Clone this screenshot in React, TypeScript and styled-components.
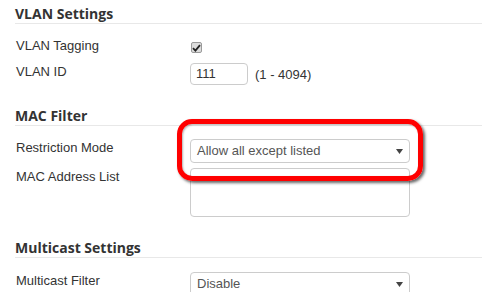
import React from 'react';
import styled, { createGlobalStyle } from 'styled-components';

const GlobalStyle = createGlobalStyle`
	html, body {
		margin: 0;
		padding: 0;
		background: #ffffff;
	}
	body {
		font-family: "Liberation Sans", Arial, sans-serif;
		font-size: 13px;
		color: #333333;
	}
`

type FieldsProps = {
	$top?: number
	$gap?: number
}

const Page = styled.div`
	position: relative;
	width: 482px;
	height: 292px;
	overflow: hidden;
	padding-left: 15px;
	box-sizing: border-box;
`

const Section = styled.section`
	margin-bottom: 17px;
`

const Heading = styled.h3`
	margin: 0 -15px 0 0;
	padding-top: 4px;
	font-family: "Open Sans", sans-serif;
	font-weight: 700;
	font-size: 14px;
	line-height: 19px;
	color: #333333;
	border-bottom: 1px solid #e8e8e8;
`

const Fields = styled.div<FieldsProps>`
	display: flex;
	flex-direction: column;
	gap: ${p => p.$gap ?? 5}px;
	padding-top: ${p => p.$top ?? 13}px;
`

const Row = styled.div<{ $height?: number }>`
	display: grid;
	grid-template-columns: 175px 1fr;
	align-items: start;
	min-height: ${p => p.$height ?? 0}px;
`

const Label = styled.label`
	padding-left: 1px;
	line-height: 17px;
	color: #333333;
`

const Control = styled.div`
	display: flex;
	align-items: center;
	gap: 7px;
`

const Check = styled.span`
	display: flex;
	align-items: center;
	justify-content: center;
	width: 11px;
	height: 11px;
	margin: 5px 0 0 1px;
	box-sizing: border-box;
	border: 1px solid #9a9a9a;
	border-radius: 2px;
	background: #dcdcdc;
`

const TextInput = styled.div`
	width: 58px;
	height: 22px;
	box-sizing: border-box;
	border: 1px solid #cccccc;
	border-radius: 4px;
	padding: 0 5px;
	line-height: 20px;
	color: #333333;
`

const Hint = styled.span`
	color: #333333;
`

const SelectBox = styled.div`
	display: flex;
	align-items: center;
	justify-content: space-between;
	width: 220px;
	height: 24px;
	box-sizing: border-box;
	border: 1px solid #cccccc;
	border-radius: 4px;
	padding: 0 6px;
	background: #ffffff;
	color: #555555;
	line-height: 22px;
`

const TextArea = styled.div`
	width: 220px;
	height: 49px;
	box-sizing: border-box;
	border: 1px solid #cccccc;
	border-radius: 4px;
	background: #ffffff;
`

const Highlight = styled.div`
	position: absolute;
	left: 177px;
	top: 119px;
	width: 246px;
	height: 62px;
	box-sizing: border-box;
	border: 5px solid #ff0000;
	border-radius: 15px;
	box-shadow: 2px 2px 3px rgba(0, 0, 0, 0.6), inset 1px 1px 2px rgba(0, 0, 0, 0.3);
	pointer-events: none;
`

const Caret = () => (
	<svg width="7" height="5" viewBox="0 0 7 5">
		<path d="M0 0 H7 L3.5 5 Z" fill="#444444" />
	</svg>
)

const CheckMark = () => (
	<svg width="9" height="8" viewBox="0 0 9 8">
		<path d="M1 4.2 L3.4 6.6 L8 1.2" fill="none" stroke="#222222" strokeWidth="1.8" />
	</svg>
)

const Select = ({ value }: { value: string }) => (
	<SelectBox>
		<span>{value}</span>
		<Caret />
	</SelectBox>
)

export default function App() {
	return (
		<>
			<GlobalStyle />
			<Page>
				<Section>
					<Heading>VLAN Settings</Heading>
					<Fields $top={13} $gap={0}>
						<Row $height={26}>
							<Label>VLAN Tagging</Label>
							<Control>
								<Check><CheckMark /></Check>
							</Control>
						</Row>
						<Row>
							<Label>VLAN ID</Label>
							<Control>
								<TextInput>111</TextInput>
								<Hint>(1 - 4094)</Hint>
							</Control>
						</Row>
					</Fields>
				</Section>

				<Section>
					<Heading>MAC Filter</Heading>
					<Fields>
						<Row>
							<Label>Restriction Mode</Label>
							<Select value="Allow all except listed" />
						</Row>
						<Row>
							<Label>MAC Address List</Label>
							<TextArea />
						</Row>
					</Fields>
				</Section>

				<Section>
					<Heading>Multicast Settings</Heading>
					<Fields $top={14}>
						<Row>
							<Label>Multicast Filter</Label>
							<Select value="Disable" />
						</Row>
					</Fields>
				</Section>

				<Highlight />
			</Page>
		</>
	);
}
